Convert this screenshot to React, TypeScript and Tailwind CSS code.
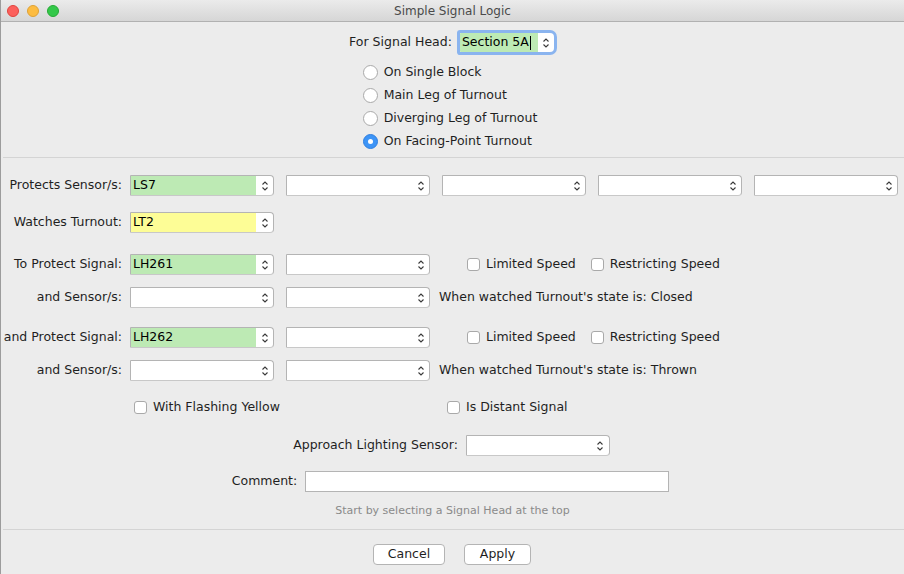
import React from "react";

const GREEN = "bg-[#bdeab4]";
const YELLOW = "bg-[#fdfd96]";

function Chevrons() {
  return (
    <svg width="8" height="12" viewBox="0 0 8 12" fill="none">
      <path d="M1.5 4.5 L4 2 L6.5 4.5" stroke="#3a3a3a" strokeWidth="1.1" />
      <path d="M1.5 7.5 L4 10 L6.5 7.5" stroke="#3a3a3a" strokeWidth="1.1" />
    </svg>
  );
}

function Combo({ value = "", tint = "" }: { value?: string; tint?: string }) {
  return (
    <div className="flex h-[21px] w-[144px] shrink-0 overflow-hidden rounded-l-[1px] rounded-r-[4px] border border-[#b4b4b4] border-b-[#c8c8c8] bg-white">
      <div className={`flex flex-1 items-center px-[2px] text-black ${tint}`}>{value}</div>
      <div className="flex w-[17px] items-center justify-center">
        <Chevrons />
      </div>
    </div>
  );
}

function Check({ label }: { label: string }) {
  return (
    <div className="flex items-center gap-[6px]">
      <span className="h-[13px] w-[13px] rounded-[3px] border border-[#a9a9a9] bg-white" />
      <span>{label}</span>
    </div>
  );
}

function Radio({ label, on = false }: { label: string; on?: boolean }) {
  return (
    <div className="flex h-[23px] items-center gap-[6px]">
      {on ? (
        <span className="flex h-[15px] w-[15px] items-center justify-center rounded-full border border-[#2f7fe0] bg-[#3d94f6]">
          <span className="h-[5px] w-[5px] rounded-full bg-white" />
        </span>
      ) : (
        <span className="h-[15px] w-[15px] rounded-full border border-[#a9a9a9] bg-white" />
      )}
      <span>{label}</span>
    </div>
  );
}

function Label({ text }: { text: string }) {
  return <div className="w-[121px] shrink-0 whitespace-nowrap text-right">{text}</div>;
}

export default function App() {
  return (
    <div className="flex h-[574px] w-[904px] flex-col overflow-hidden border-l border-[#9c9c9c] bg-[#ececec] font-['DejaVu_Sans',sans-serif] text-[12.5px] leading-none text-[#1f1f1f]">
      {/* title bar */}
      <div className="relative flex h-[22px] shrink-0 items-center border-b border-[#b1b1b1] bg-gradient-to-b from-[#ebebeb] to-[#d6d6d6]">
        <div className="absolute left-[6px] top-[5px] flex gap-[8px]">
          <span className="h-[12px] w-[12px] rounded-full border border-[#e0443e] bg-[#fc605c]" />
          <span className="h-[12px] w-[12px] rounded-full border border-[#dea236] bg-[#fdbc40]" />
          <span className="h-[12px] w-[12px] rounded-full border border-[#27aa35] bg-[#34c84a]" />
        </div>
        <div className="w-full text-center text-[12px] text-[#4a4a4a]">Simple Signal Logic</div>
      </div>

      {/* signal head + radios */}
      <div className="flex flex-col items-center pt-[11px]">
        <div className="flex items-center gap-[8px] pr-[2px]">
          <span>For Signal Head:</span>
          <div className="flex h-[19px] w-[94px] overflow-hidden rounded-l-[1px] rounded-r-[4px] bg-white shadow-[0_0_0_3px_#8ab4ef]">
            <div className={`flex flex-1 items-center px-[2px] text-black ${GREEN}`}>
              Section 5A<span className="ml-[1px] h-[14px] w-[1px] bg-black" />
            </div>
            <div className="flex w-[16px] items-center justify-center">
              <Chevrons />
            </div>
          </div>
        </div>
        <div className="mt-[9px] flex flex-col items-start pr-[5px]">
          <Radio label="On Single Block" />
          <Radio label="Main Leg of Turnout" />
          <Radio label="Diverging Leg of Turnout" />
          <Radio label="On Facing-Point Turnout" on />
        </div>
      </div>

      <div className="ml-[2px] mt-[4px] h-px bg-[#d4d4d4]" />

      {/* form rows */}
      <div className="mt-[17px] flex h-[21px] items-center gap-[8px]">
        <Label text="Protects Sensor/s:" />
        <div className="flex gap-[12px]">
          <Combo value="LS7" tint={GREEN} />
          <Combo />
          <Combo />
          <Combo />
          <Combo />
        </div>
      </div>

      <div className="mt-[16px] flex h-[21px] items-center gap-[8px]">
        <Label text="Watches Turnout:" />
        <Combo value="LT2" tint={YELLOW} />
      </div>

      <div className="mt-[21px] flex h-[21px] items-center gap-[8px]">
        <Label text="To Protect Signal:" />
        <div className="flex items-center gap-[12px]">
          <Combo value="LH261" tint={GREEN} />
          <Combo />
        </div>
        <div className="ml-[29px] flex items-center gap-[15px]">
          <Check label="Limited Speed" />
          <Check label="Restricting Speed" />
        </div>
      </div>

      <div className="mt-[12px] flex h-[21px] items-center gap-[8px]">
        <Label text="and Sensor/s:" />
        <div className="flex items-center gap-[12px]">
          <Combo />
          <Combo />
        </div>
        <span className="ml-[1px] whitespace-nowrap">When watched Turnout's state is: Closed</span>
      </div>

      <div className="mt-[19px] flex h-[21px] items-center gap-[8px]">
        <Label text="and Protect Signal:" />
        <div className="flex items-center gap-[12px]">
          <Combo value="LH262" tint={GREEN} />
          <Combo />
        </div>
        <div className="ml-[29px] flex items-center gap-[15px]">
          <Check label="Limited Speed" />
          <Check label="Restricting Speed" />
        </div>
      </div>

      <div className="mt-[12px] flex h-[21px] items-center gap-[8px]">
        <Label text="and Sensor/s:" />
        <div className="flex items-center gap-[12px]">
          <Combo />
          <Combo />
        </div>
        <span className="ml-[1px] whitespace-nowrap">When watched Turnout's state is: Thrown</span>
      </div>

      <div className="mt-[16px] flex h-[21px] items-center">
        <div className="ml-[133px] w-[313px]">
          <Check label="With Flashing Yellow" />
        </div>
        <Check label="Is Distant Signal" />
      </div>

      <div className="mt-[17px] flex h-[21px] items-center justify-center gap-[8px] pr-[2px]">
        <span>Approach Lighting Sensor:</span>
        <Combo />
      </div>

      <div className="mt-[15px] flex h-[21px] items-center justify-center gap-[8px] pr-[4px]">
        <span>Comment:</span>
        <div className="h-[21px] w-[364px] border border-[#b4b4b4] bg-white" />
      </div>

      <div className="mt-[13px] text-center text-[11px] text-[#8a8a8a]">
        Start by selecting a Signal Head at the top
      </div>

      <div className="ml-[2px] mt-[13px] h-px bg-[#d4d4d4]" />

      <div className="mt-[14px] flex justify-center gap-[19px] pr-[1px]">
        <button className="h-[21px] w-[72px] rounded-[4px] border border-[#b4b4b4] bg-white text-[#1f1f1f]">
          Cancel
        </button>
        <button className="h-[21px] w-[67px] rounded-[4px] border border-[#b4b4b4] bg-white text-[#1f1f1f]">
          Apply
        </button>
      </div>
    </div>
  );
}
